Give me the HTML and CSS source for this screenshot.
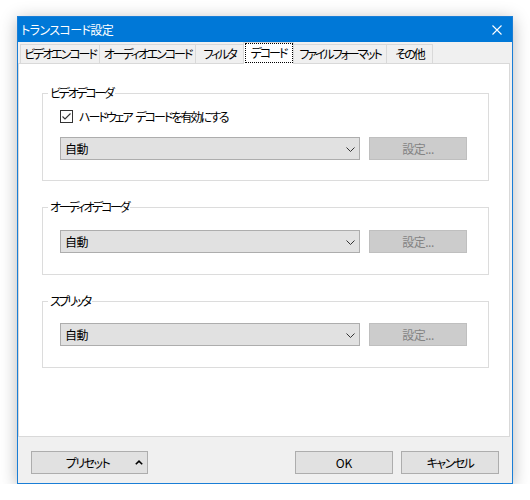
FILE: index.html
```html
<!DOCTYPE html>
<html lang="ja">
<head>
<meta charset="utf-8">
<title>トランスコード設定</title>
<link rel="stylesheet" href="styles.css">
</head>
<body>
<div class="window">
  <header class="titlebar">
    <span class="title">トランスコード設定</span>
    <svg class="close" width="10" height="10" viewBox="0 0 10 10"><path d="M0.5 0.5L9.5 9.5M9.5 0.5L0.5 9.5" stroke="#fff" stroke-width="1.1" fill="none"/></svg>
  </header>
  <nav class="tabs">
    <div class="tab w1">ビデオエンコード</div>
    <div class="tab w2">オーディオエンコード</div>
    <div class="tab w3">フィルタ</div>
    <div class="tab w4 active"><span class="focus">デコード</span></div>
    <div class="tab w5">ファイルフォーマット</div>
    <div class="tab w6">その他</div>
  </nav>
  <section class="panel">
    <div class="group g1">
      <div class="legend">ビデオデコーダ</div>
      <label class="check-row">
        <span class="checkbox"><svg width="11" height="11" viewBox="0 0 11 11"><path d="M1.5 5.5L4 8L9.5 2.5" stroke="#333" stroke-width="1.1" fill="none"/></svg></span>
        <span class="check-label">ハードウェア デコードを有効にする</span>
      </label>
      <div class="row">
        <div class="combo"><span>自動</span><svg width="9" height="5" viewBox="0 0 9 5"><path d="M0.5 0.5L4.5 4.5L8.5 0.5" stroke="#333" stroke-width="1" fill="none"/></svg></div>
        <button class="btn setting" disabled>設定...</button>
      </div>
    </div>
    <div class="group g2">
      <div class="legend">オーディオデコーダ</div>
      <div class="row">
        <div class="combo"><span>自動</span><svg width="9" height="5" viewBox="0 0 9 5"><path d="M0.5 0.5L4.5 4.5L8.5 0.5" stroke="#333" stroke-width="1" fill="none"/></svg></div>
        <button class="btn setting" disabled>設定...</button>
      </div>
    </div>
    <div class="group g3">
      <div class="legend">スプリッタ</div>
      <div class="row">
        <div class="combo"><span>自動</span><svg width="9" height="5" viewBox="0 0 9 5"><path d="M0.5 0.5L4.5 4.5L8.5 0.5" stroke="#333" stroke-width="1" fill="none"/></svg></div>
        <button class="btn setting" disabled>設定...</button>
      </div>
    </div>
  </section>
  <footer class="footer">
    <button class="btn preset"><span></span><span>プリセット</span><svg class="caret" width="8" height="5" viewBox="0 0 8 5"><path d="M0.8 4.3L4 1.2L7.2 4.3" stroke="#000" stroke-width="1.6" fill="none"/></svg></button>
    <button class="btn ok">OK</button>
    <button class="btn cancel">キャンセル</button>
  </footer>
</div>
</body>
</html>
```
FILE: styles.css
```css
* { box-sizing: border-box; }
html, body { margin: 0; background: #fff; }
body {
  padding: 16px 0 0 17px;
  font-family: "Noto Sans CJK JP", "Noto Sans", sans-serif;
  font-size: 12px;
  color: #000;
  font-feature-settings: "palt" 1;
  letter-spacing: -1.5px;
}
.window {
  width: 496px;
  height: 468px;
  border: 1px solid #1a7ed6;
  background: #f0f0f0;
  box-shadow: 0 3px 16px rgba(0, 0, 0, 0.28);
  display: flex;
  flex-direction: column;
}
.titlebar {
  height: 25px;
  flex: none;
  background: #0078d7;
  color: #fff;
  display: flex;
  align-items: center;
  justify-content: space-between;
  padding: 0 10px 0 3px;
  line-height: 14px;
  letter-spacing: -0.6px;
}
.close { display: block; }
.tabs {
  height: 21px;
  flex: none;
  display: flex;
  align-items: flex-end;
  padding-left: 2px;
}
.tab {
  height: 19px;
  border: 1px solid #d9d9d9;
  border-bottom: none;
  background: #f0f0f0;
  margin-left: -1px;
  display: flex;
  align-items: center;
  justify-content: center;
  line-height: 14px;
  white-space: nowrap;
  letter-spacing: -2.1px;
}
.tab.w1 { margin-left: 0; width: 80px; }
.tab.w2 { width: 97px; }
.tab.w3 { width: 49px; }
.tab.w4 { width: 51px; }
.tab.w5 { width: 94px; }
.tab.w6 { width: 47px; }
.tab.active {
  height: 22px;
  margin-bottom: -1px;
  background: #fff;
  position: relative;
  z-index: 1;
  align-items: flex-start;
  padding-top: 1px;
}
.focus {
  width: 46px;
  height: 18px;
  outline: 1px dotted #000;
  display: flex;
  align-items: center;
  justify-content: center;
}
.panel {
  height: 374px;
  flex: none;
  margin-right: 2px;
  border: 1px solid #d9d9d9;
  background: #fff;
  padding: 29px 20px 0 23px;
  display: flex;
  flex-direction: column;
  gap: 26px;
}
.group {
  border: 1px solid #dcdcdc;
  padding: 0 21px 20px 17px;
}
.g2, .g3 { padding-bottom: 21px; }
.legend {
  width: fit-content;
  height: 14px;
  line-height: 14px;
  margin: -8px 0 0 -12px;
  padding: 0 2px;
  background: #fff;
  letter-spacing: -2.3px;
}
.check-row {
  display: flex;
  align-items: center;
  height: 13px;
  margin-top: 10px;
  gap: 6px;
  line-height: 13px;
}
.check-label {
  letter-spacing: -2px;
  word-spacing: 3px;
}
.checkbox {
  width: 13px;
  height: 13px;
  border: 1px solid #333;
  background: #fff;
  display: flex;
  align-items: center;
  justify-content: center;
}
.checkbox svg { display: block; }
.row {
  display: flex;
  gap: 9px;
  margin-top: 16px;
}
.g1 .row { margin-top: 14px; }
.g3 .row { margin-top: 15px; }
.combo {
  width: 300px;
  height: 23px;
  background: #e1e1e1;
  border: 1px solid #adadad;
  display: flex;
  align-items: center;
  justify-content: space-between;
  padding: 0 4px 0 4px;
  line-height: 14px;
  letter-spacing: -0.5px;
}
.combo svg { display: block; margin-top: 1px; }
.btn {
  height: 23px;
  background: #e1e1e1;
  border: 1px solid #adadad;
  font: inherit;
  font-size: 12px;
  color: #000;
  padding: 0;
  line-height: 14px;
  margin: 0;
  letter-spacing: -1.5px;
}
.setting {
  width: 98px;
  background: #cccccc;
  border-color: #bfbfbf;
  color: #838383;
  letter-spacing: -0.5px;
}
.footer {
  height: 46px;
  flex: none;
  display: flex;
  align-items: flex-start;
  padding: 14px 13px 0 13px;
}
.preset {
  width: 117px;
  display: grid;
  grid-template-columns: 1fr auto 1fr;
  align-items: center;
  padding: 0 4px 0 0;
}
.preset .caret { justify-self: end; display: block; }
.ok { width: 98px; margin-left: auto; letter-spacing: 0; }
.cancel { width: 98px; margin-left: 8px; }
```
